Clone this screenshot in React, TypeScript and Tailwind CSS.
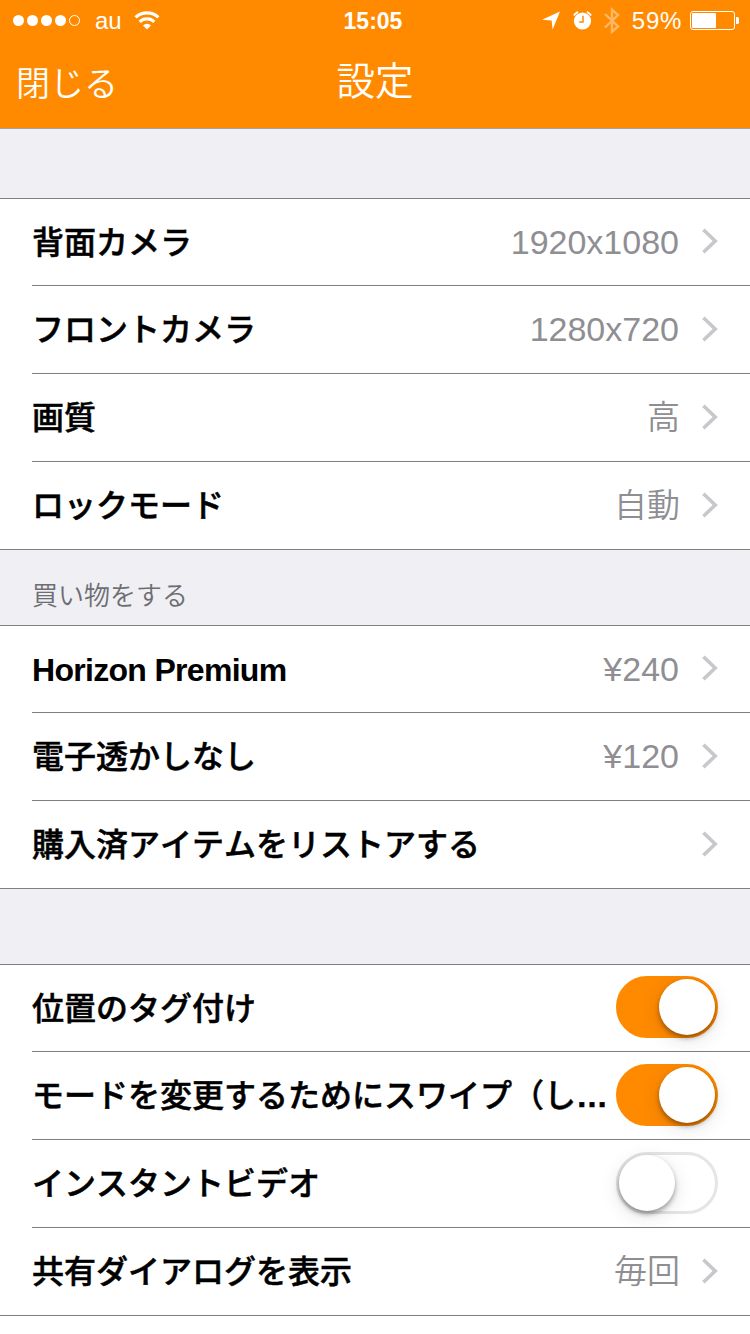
import { useState } from 'react'
import clsx from 'clsx'

type Row = {
  label: string
  value?: string
  toggle?: boolean
  latin?: boolean
  truncated?: boolean
}

const cameraRows: Row[] = [
  { label: '背面カメラ', value: '1920x1080' },
  { label: 'フロントカメラ', value: '1280x720' },
  { label: '画質', value: '高' },
  { label: 'ロックモード', value: '自動' },
]

const shopRows: Row[] = [
  { label: 'Horizon Premium', value: '¥240', latin: true },
  { label: '電子透かしなし', value: '¥120' },
  { label: '購入済アイテムをリストアする' },
]

const optionRows: Row[] = [
  { label: '位置のタグ付け', toggle: true },
  { label: 'モードを変更するためにスワイプ（し', toggle: true, truncated: true },
  { label: 'インスタントビデオ', toggle: false },
  { label: '共有ダイアログを表示', value: '毎回' },
]

function StatusBar() {
  return (
    <div className="grid h-10 grid-cols-3 items-center pl-[13px] pr-[11px] text-[24px] leading-[38px]">
      <div className="flex items-center">
        <svg width="68" height="12" viewBox="0 0 68 12" fill="#fff">
          <circle cx="5.5" cy="6.5" r="5.5" />
          <circle cx="19.5" cy="6.5" r="5.5" />
          <circle cx="33.5" cy="6.5" r="5.5" />
          <circle cx="47.5" cy="6.5" r="5.5" />
          <circle cx="61.5" cy="6.5" r="5" fill="none" stroke="#fff" />
        </svg>
        <span className="ml-[14px] pt-[2px]">au</span>
        <svg className="ml-[12px]" width="26" height="19" viewBox="0 0 26 19" fill="none" stroke="#fff" strokeWidth="3.2">
          <path d="M1.6 6.4a16.4 16.4 0 0 1 22.8 0" />
          <path d="M5.7 10.8a10.6 10.6 0 0 1 14.6 0" />
          <path d="M13 18.6l-4-4.2a5.8 5.8 0 0 1 8 0z" fill="#fff" stroke="none" />
        </svg>
      </div>

      <div className="pr-[6px] pt-[2px] text-center text-[23px] font-bold">15:05</div>

      <div className="flex items-center justify-end">
        <svg width="18" height="19" viewBox="0 0 18 19" fill="#fff">
          <path d="M18 0.6L10.6 18.6L9.6 9.6L0 8.8z" />
        </svg>
        <svg className="ml-[13px]" width="19" height="19" viewBox="0 0 19 19">
          <path d="M.9 4.6A10 10 0 0 1 5 .9M18.1 4.6A10 10 0 0 0 14 .9" stroke="#fff" strokeWidth="1.8" fill="none" />
          <circle cx="9.5" cy="10" r="8.6" fill="#fff" />
          <path d="M10 4.8v6.2H6.2" stroke="#ff8a00" strokeWidth="1.5" fill="none" />
        </svg>
        <svg className="ml-[12px] opacity-40" width="16" height="27" viewBox="0 0 16 27" fill="none" stroke="#fff" strokeWidth="2.4">
          <path d="M1 7l13 12.5l-6 5.3V2.6l6 5.4L1 20.5" />
        </svg>
        <span className="ml-[12px] mr-[2px] pt-[2px] tracking-[0.7px]">59%</span>
        <svg className="ml-[6px]" width="49" height="19" viewBox="0 0 49 19" fill="#fff">
          <rect x=".5" y=".5" width="44" height="18" rx="2.5" fill="none" stroke="#fff" />
          <rect x="2" y="2" width="24" height="15" rx="1" />
          <path d="M46 6h1.5q1.5 0 1.5 1.5v4q0 1.5-1.5 1.5H46z" />
        </svg>
      </div>
    </div>
  )
}

function Chevron() {
  return (
    <svg className="mb-[2px] ml-[23px] shrink-0" width="16" height="26" viewBox="0 0 16 26" fill="none" stroke="#c7c7cc" strokeWidth="3.6">
      <path d="M1.4 1.8L13.2 13L1.4 24.2" />
    </svg>
  )
}

function Toggle({ initial }: { initial: boolean }) {
  const [on, setOn] = useState(initial)

  return (
    <button
      role="switch"
      aria-checked={on}
      onClick={() => setOn(!on)}
      className={clsx(
        'mb-[2px] flex h-[62px] w-[102px] shrink-0 items-center rounded-full border-[3px]',
        on ? 'justify-end border-[#ff8a00] bg-[#ff8a00]' : 'border-[#e5e5e5] bg-white'
      )}
    >
      <span className="size-14 rounded-full bg-white shadow-[0_3px_5px_rgba(0,0,0,0.35),0_5px_20px_rgba(0,0,0,0.12)]" />
    </button>
  )
}

function SettingsGroup({ rows }: { rows: Row[] }) {
  return (
    <section className="border-y border-[#7f7f82] bg-white pl-8">
      {rows.map((row, i) => (
        <div
          key={row.label}
          className={clsx(
            'flex items-center pr-8',
            i === 0 ? 'h-[86px]' : 'h-[88px] border-t border-[#7f7f82]'
          )}
        >
          <span
            className={clsx(
              'flex-1 whitespace-nowrap pt-[1px] text-[32px] text-black',
              row.latin
                ? 'font-bold tracking-[-0.7px]'
                : 'font-medium [-webkit-text-stroke:0.5px_#000] [font-kerning:none]'
            )}
          >
            {row.label}
            {row.truncated && <span className="font-bold">…</span>}
          </span>
          {row.value && (
            <span
              className={clsx(
                'font-[350] text-[#8e8e93]',
                /\d/.test(row.value) ? 'text-[34px]' : '-mr-px text-[33px]'
              )}
            >
              {row.value}
            </span>
          )}
          {row.toggle === undefined ? <Chevron /> : <Toggle initial={row.toggle} />}
        </div>
      ))}
    </section>
  )
}

export default function App() {
  return (
    <div
      lang="ja"
      className="h-[1334px] w-[750px] overflow-hidden bg-[#efeff4] font-['Liberation_Sans','Noto_Sans_CJK_JP',sans-serif]"
    >
      <header className="h-[129px] border-b border-[#a5a3a5] bg-[#ff8a00] text-white">
        <StatusBar />
        <div className="grid h-[84px] grid-cols-3 items-center px-4">
          <button className="pt-[4px] text-left text-[34px] font-[350]">閉じる</button>
          <h1 className="text-center text-[38.5px] font-[350]">設定</h1>
        </div>
      </header>

      <main>
        <div className="h-[69px]" />
        <SettingsGroup rows={cameraRows} />
        <h2 className="flex h-[75px] items-center px-8 pt-[18px] text-[26px] font-[350] text-[#6d6d72]">
          買い物をする
        </h2>
        <SettingsGroup rows={shopRows} />
        <div className="h-[75px]" />
        <SettingsGroup rows={optionRows} />
      </main>

      {/* next row peeks in at the bottom */}
      <div className="h-5 bg-white" />
    </div>
  )
}
